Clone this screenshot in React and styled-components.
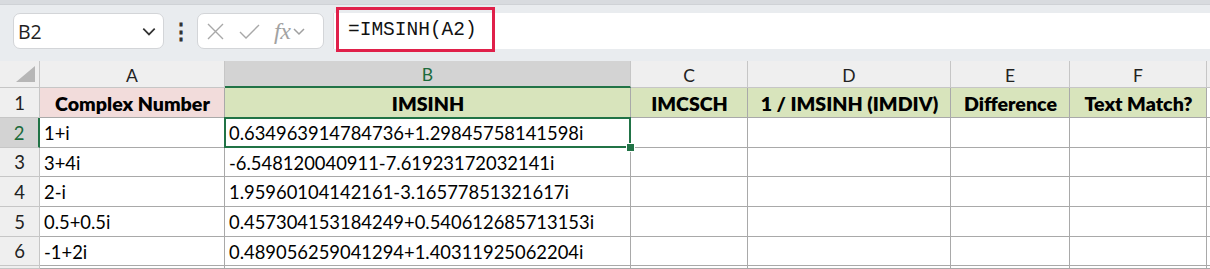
import React from 'react';
import styled, { createGlobalStyle } from 'styled-components';

const GlobalStyle = createGlobalStyle`
    html, body {
        margin: 0;
        padding: 0;
        background: #e9ecef;
        overflow: hidden;
    }
    body {
        width: 1210px;
        height: 269px;
        font-family: Lato, "Open Sans", sans-serif;
    }
`;

const GREEN = '#217346';

const Page = styled.div`
    width: 1210px;
    height: 269px;
    display: flex;
    flex-direction: column;
    background: #e9ecef;
`;

const TopStrip = styled.div`
    height: 4px;
    background: #d8dbdf;
    border-bottom: 1px solid #cfd2d6;
`;

const Toolbar = styled.div`
    display: flex;
    align-items: center;
    height: 36px;
    margin-top: 8px;
    padding-left: 13px;
`;

const NameBox = styled.div`
    box-sizing: border-box;
    width: 151px;
    height: 36px;
    background: #fff;
    border: 1px solid #d3d5d8;
    border-radius: 7px;
    display: flex;
    align-items: center;
    justify-content: space-between;
    padding: 0 6px 0 4px;
    font-family: "Open Sans", sans-serif;
    font-size: 19.5px;
    color: #1f1f1f;
`;

const Dots = styled.div`
    width: 33px;
    text-align: center;
    font-size: 22px;
    font-weight: bold;
    color: #333;
    line-height: 1;
`;

const FxBox = styled.div`
    box-sizing: border-box;
    width: 127px;
    height: 36px;
    background: #fff;
    border: 1px solid #d3d5d8;
    border-radius: 7px;
    display: flex;
    align-items: center;
    gap: 14px;
    padding-left: 8px;
`;

const FxLabel = styled.span`
    font-family: "Liberation Serif", serif;
    font-style: italic;
    font-size: 24px;
    color: #a2a2a2;
    margin-left: 0;
    margin-right: -12px;
    letter-spacing: -0.5px;
`;

const FormulaBar = styled.div`
    flex: 1;
    height: 36px;
    margin-left: 9px;
    background: #fff;
    border-left: 1px solid #dcdcdc;
    display: flex;
    align-items: center;
`;

const Highlight = styled.div`
    box-sizing: border-box;
    width: 159px;
    height: 45px;
    margin: -3px 0 0 2px;
    border: 3px solid #e0204a;
    display: flex;
    align-items: center;
    padding-left: 9px;
    font-family: "Liberation Mono", monospace;
    font-size: 19.5px;
    color: #111;
`;

const Sheet = styled.div`
    margin-top: 12px;
    flex: 1;
    display: grid;
    grid-template-columns: 40px 185px 406px 117px 203px 119px 137px 1fr;
    grid-template-rows: 27px 30px 30px 29px 30px 30px 29px 1fr;
    background: #fff;
    font-size: 18.4px;
    color: #000;
`;

const Corner = styled.div`
    background: #efefef;
    border-right: 1px solid #c6c6c6;
    border-bottom: 1px solid #c6c6c6;
    display: flex;
    align-items: flex-end;
    justify-content: flex-end;
    padding: 0 4px 5px 0;
`;

const ColHead = styled.div`
    box-sizing: border-box;
    background: ${p => (p.active ? '#d3d3d3' : '#efefef')};
    color: ${p => (p.active ? '#1c6b3c' : '#222')};
    border-right: 1px solid #c6c6c6;
    border-bottom: ${p => (p.active ? `2px solid ${GREEN}` : '1px solid #c6c6c6')};
    display: flex;
    align-items: center;
    justify-content: center;
    font-size: 17.5px;
    padding-top: 2px;
`;

const RowHead = styled.div`
    box-sizing: border-box;
    background: ${p => (p.active ? '#d3d3d3' : '#efefef')};
    color: ${p => (p.active ? '#1c6b3c' : '#222')};
    border-right: ${p => (p.active ? `2px solid ${GREEN}` : '1px solid #c6c6c6')};
    border-bottom: 1px solid #c6c6c6;
    display: flex;
    align-items: center;
    justify-content: center;
    font-size: 18.5px;
`;

const Cell = styled.div`
    box-sizing: border-box;
    position: relative;
    background: ${p => p.fill || '#fff'};
    border-right: 1px solid #a9a9a9;
    border-bottom: 1px solid #a9a9a9;
    display: flex;
    align-items: center;
    justify-content: ${p => (p.center ? 'center' : 'flex-start')};
    padding: 1px 3px 0 4px;
    font-weight: ${p => (p.bold ? 800 : 400)};
    font-size: ${p => (p.bold ? '19.6px' : 'inherit')};
    white-space: nowrap;
    overflow: visible;
`;

const Selection = styled.div`
    position: absolute;
    left: -1px;
    top: -1px;
    right: -1px;
    bottom: -1px;
    border: 2px solid ${GREEN};
    pointer-events: none;
`;

const FillHandle = styled.div`
    position: absolute;
    right: -5px;
    bottom: -5px;
    width: 7px;
    height: 7px;
    background: ${GREEN};
    border: 1px solid #fff;
    z-index: 2;
`;

const Chevron = ({ size = 14, color = '#333' }) => (
    <svg width={size} height={size} viewBox="0 0 14 14">
        <path d="M2 5 L7 10 L12 5" fill="none" stroke={color} strokeWidth="1.5" />
    </svg>
);

const CrossIcon = () => (
    <svg width="19" height="19" viewBox="0 0 19 19">
        <path d="M2 2 L17 17 M17 2 L2 17" stroke="#a8a8a8" strokeWidth="1.4" fill="none" />
    </svg>
);

const CheckIcon = () => (
    <svg width="21" height="17" viewBox="0 0 21 17">
        <path d="M1 9 L7 15 L20 2" stroke="#a8a8a8" strokeWidth="1.4" fill="none" />
    </svg>
);

const CornerTriangle = () => (
    <svg width="19" height="16" viewBox="0 0 19 16">
        <path d="M0 16 L19 16 L19 0 Z" fill="#b6b6b6" />
    </svg>
);

const columns = ['A', 'B', 'C', 'D', 'E', 'F'];
const headers = ['IMSINH', 'IMCSCH', '1 / IMSINH (IMDIV)', 'Difference', 'Text Match?'];

const rows = [
    ['1+i', '0.634963914784736+1.29845758141598i'],
    ['3+4i', '-6.548120040911-7.61923172032141i'],
    ['2-i', '1.95960104142161-3.16577851321617i'],
    ['0.5+0.5i', '0.457304153184249+0.540612685713153i'],
    ['-1+2i', '0.489056259041294+1.40311925062204i'],
];

const App = () => {
    return (
        <Page>
            <GlobalStyle />
            <TopStrip />
            <Toolbar>
                <NameBox>
                    <span>B2</span>
                    <Chevron size={16} />
                </NameBox>
                <Dots>⋮</Dots>
                <FxBox>
                    <CrossIcon />
                    <CheckIcon />
                    <FxLabel>fx</FxLabel>
                    <Chevron size={14} color="#a0a0a0" />
                </FxBox>
                <FormulaBar>
                    <Highlight>=IMSINH(A2)</Highlight>
                </FormulaBar>
            </Toolbar>
            <Sheet>
                <Corner>
                    <CornerTriangle />
                </Corner>
                {columns.map(c => (
                    <ColHead key={c} active={c === 'B'}>{c}</ColHead>
                ))}
                <ColHead />

                <RowHead>1</RowHead>
                <Cell fill="#f2dcdb" bold center>Complex Number</Cell>
                {headers.map(h => (
                    <Cell key={h} fill="#d8e4bc" bold center>{h}</Cell>
                ))}
                <Cell />

                {rows.map((r, i) => (
                    <React.Fragment key={i}>
                        <RowHead active={i === 0}>{i + 2}</RowHead>
                        <Cell>{r[0]}</Cell>
                        <Cell>
                            {r[1]}
                            {i === 0 && (
                                <>
                                    <Selection />
                                    <FillHandle />
                                </>
                            )}
                        </Cell>
                        <Cell />
                        <Cell />
                        <Cell />
                        <Cell />
                        <Cell />
                    </React.Fragment>
                ))}

                <RowHead />
                {columns.map(c => <Cell key={c} />)}
                <Cell />
            </Sheet>
        </Page>
    );
};

export default App;
